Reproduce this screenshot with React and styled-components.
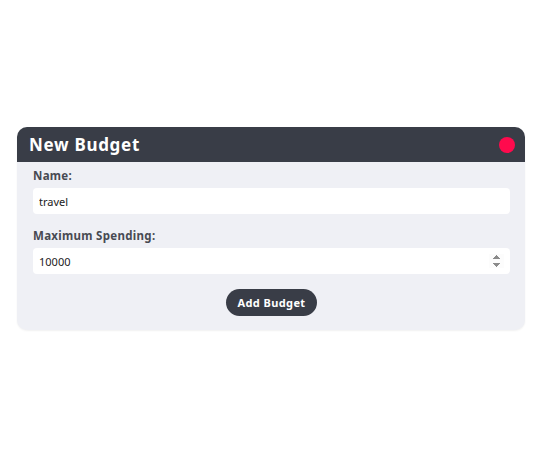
import React, { useState } from "react";
import styled, { createGlobalStyle } from "styled-components";

const GlobalStyle = createGlobalStyle`
  html, body {
    margin: 0;
    padding: 0;
    background: #ffffff;
  }

  #root {
    min-height: 100vh;
  }
`;

const App = () => {
  const [name, setName] = useState("travel");
  const [max, setMax] = useState("10000");

  const handleSubmit = event => {
    event.preventDefault();
  };

  return (
    <>
      <GlobalStyle />
      <Page>
        <Card onSubmit={handleSubmit}>
          <Header>
            <Title>New Budget</Title>
            <CloseDot type="button" aria-label="close" />
          </Header>
          <Body>
            <Field>
              <Label htmlFor="name">Name:</Label>
              <Input
                id="name"
                type="text"
                value={name}
                onChange={e => setName(e.target.value)}
              />
            </Field>
            <Field>
              <Label htmlFor="max">Maximum Spending:</Label>
              <Input
                id="max"
                type="number"
                value={max}
                autoFocus
                onChange={e => setMax(e.target.value)}
              />
            </Field>
            <Actions>
              <SubmitButton type="submit">Add Budget</SubmitButton>
            </Actions>
          </Body>
        </Card>
      </Page>
    </>
  );
};

const Page = styled.div`
  display: flex;
  align-items: center;
  justify-content: flex-start;
  height: 457px;
  padding-left: 17px;
  box-sizing: border-box;
  font-family: "Noto Sans", "Open Sans", sans-serif;
`;

const Card = styled.form`
  width: 508px;
  border-radius: 10px;
  background-color: #eff0f5;
  box-shadow: 0 1px 2px rgba(0, 0, 0, 0.06);
  overflow: hidden;
`;

const Header = styled.div`
  display: flex;
  align-items: center;
  justify-content: space-between;
  height: 35px;
  padding: 0 10px 0 12px;
  background-color: #393d47;
`;

const Title = styled.h2`
  margin: 0;
  color: #ffffff;
  font-size: 17px;
  font-weight: 700;
  letter-spacing: 0.7px;
  line-height: 35px;
`;

const CloseDot = styled.button`
  width: 16px;
  height: 16px;
  padding: 0;
  border: none;
  border-radius: 50%;
  background-color: #ff0a4d;
  cursor: pointer;
`;

const Body = styled.div`
  display: flex;
  flex-direction: column;
  padding: 7px 15px 14px 16px;
`;

const Field = styled.div`
  display: flex;
  flex-direction: column;
  gap: 5px;
  margin-bottom: 15px;
`;

const Label = styled.label`
  color: #474a52;
  font-size: 11.5px;
  font-weight: 700;
  line-height: 14px;
  letter-spacing: 0.3px;
`;

const Input = styled.input`
  height: 26px;
  padding: 0 6px;
  border: none;
  border-radius: 4px;
  background-color: #ffffff;
  color: #222222;
  font-family: "Noto Sans", sans-serif;
  font-size: 11px;
  outline: none;
  box-sizing: border-box;
`;

const Actions = styled.div`
  display: flex;
  justify-content: center;
`;

const SubmitButton = styled.button`
  height: 27px;
  padding: 0 11px;
  border: none;
  border-radius: 14px;
  background-color: #393d47;
  color: #ffffff;
  font-family: "Noto Sans", sans-serif;
  font-size: 11px;
  font-weight: 700;
  letter-spacing: 0.4px;
  cursor: pointer;
`;

export default App;
